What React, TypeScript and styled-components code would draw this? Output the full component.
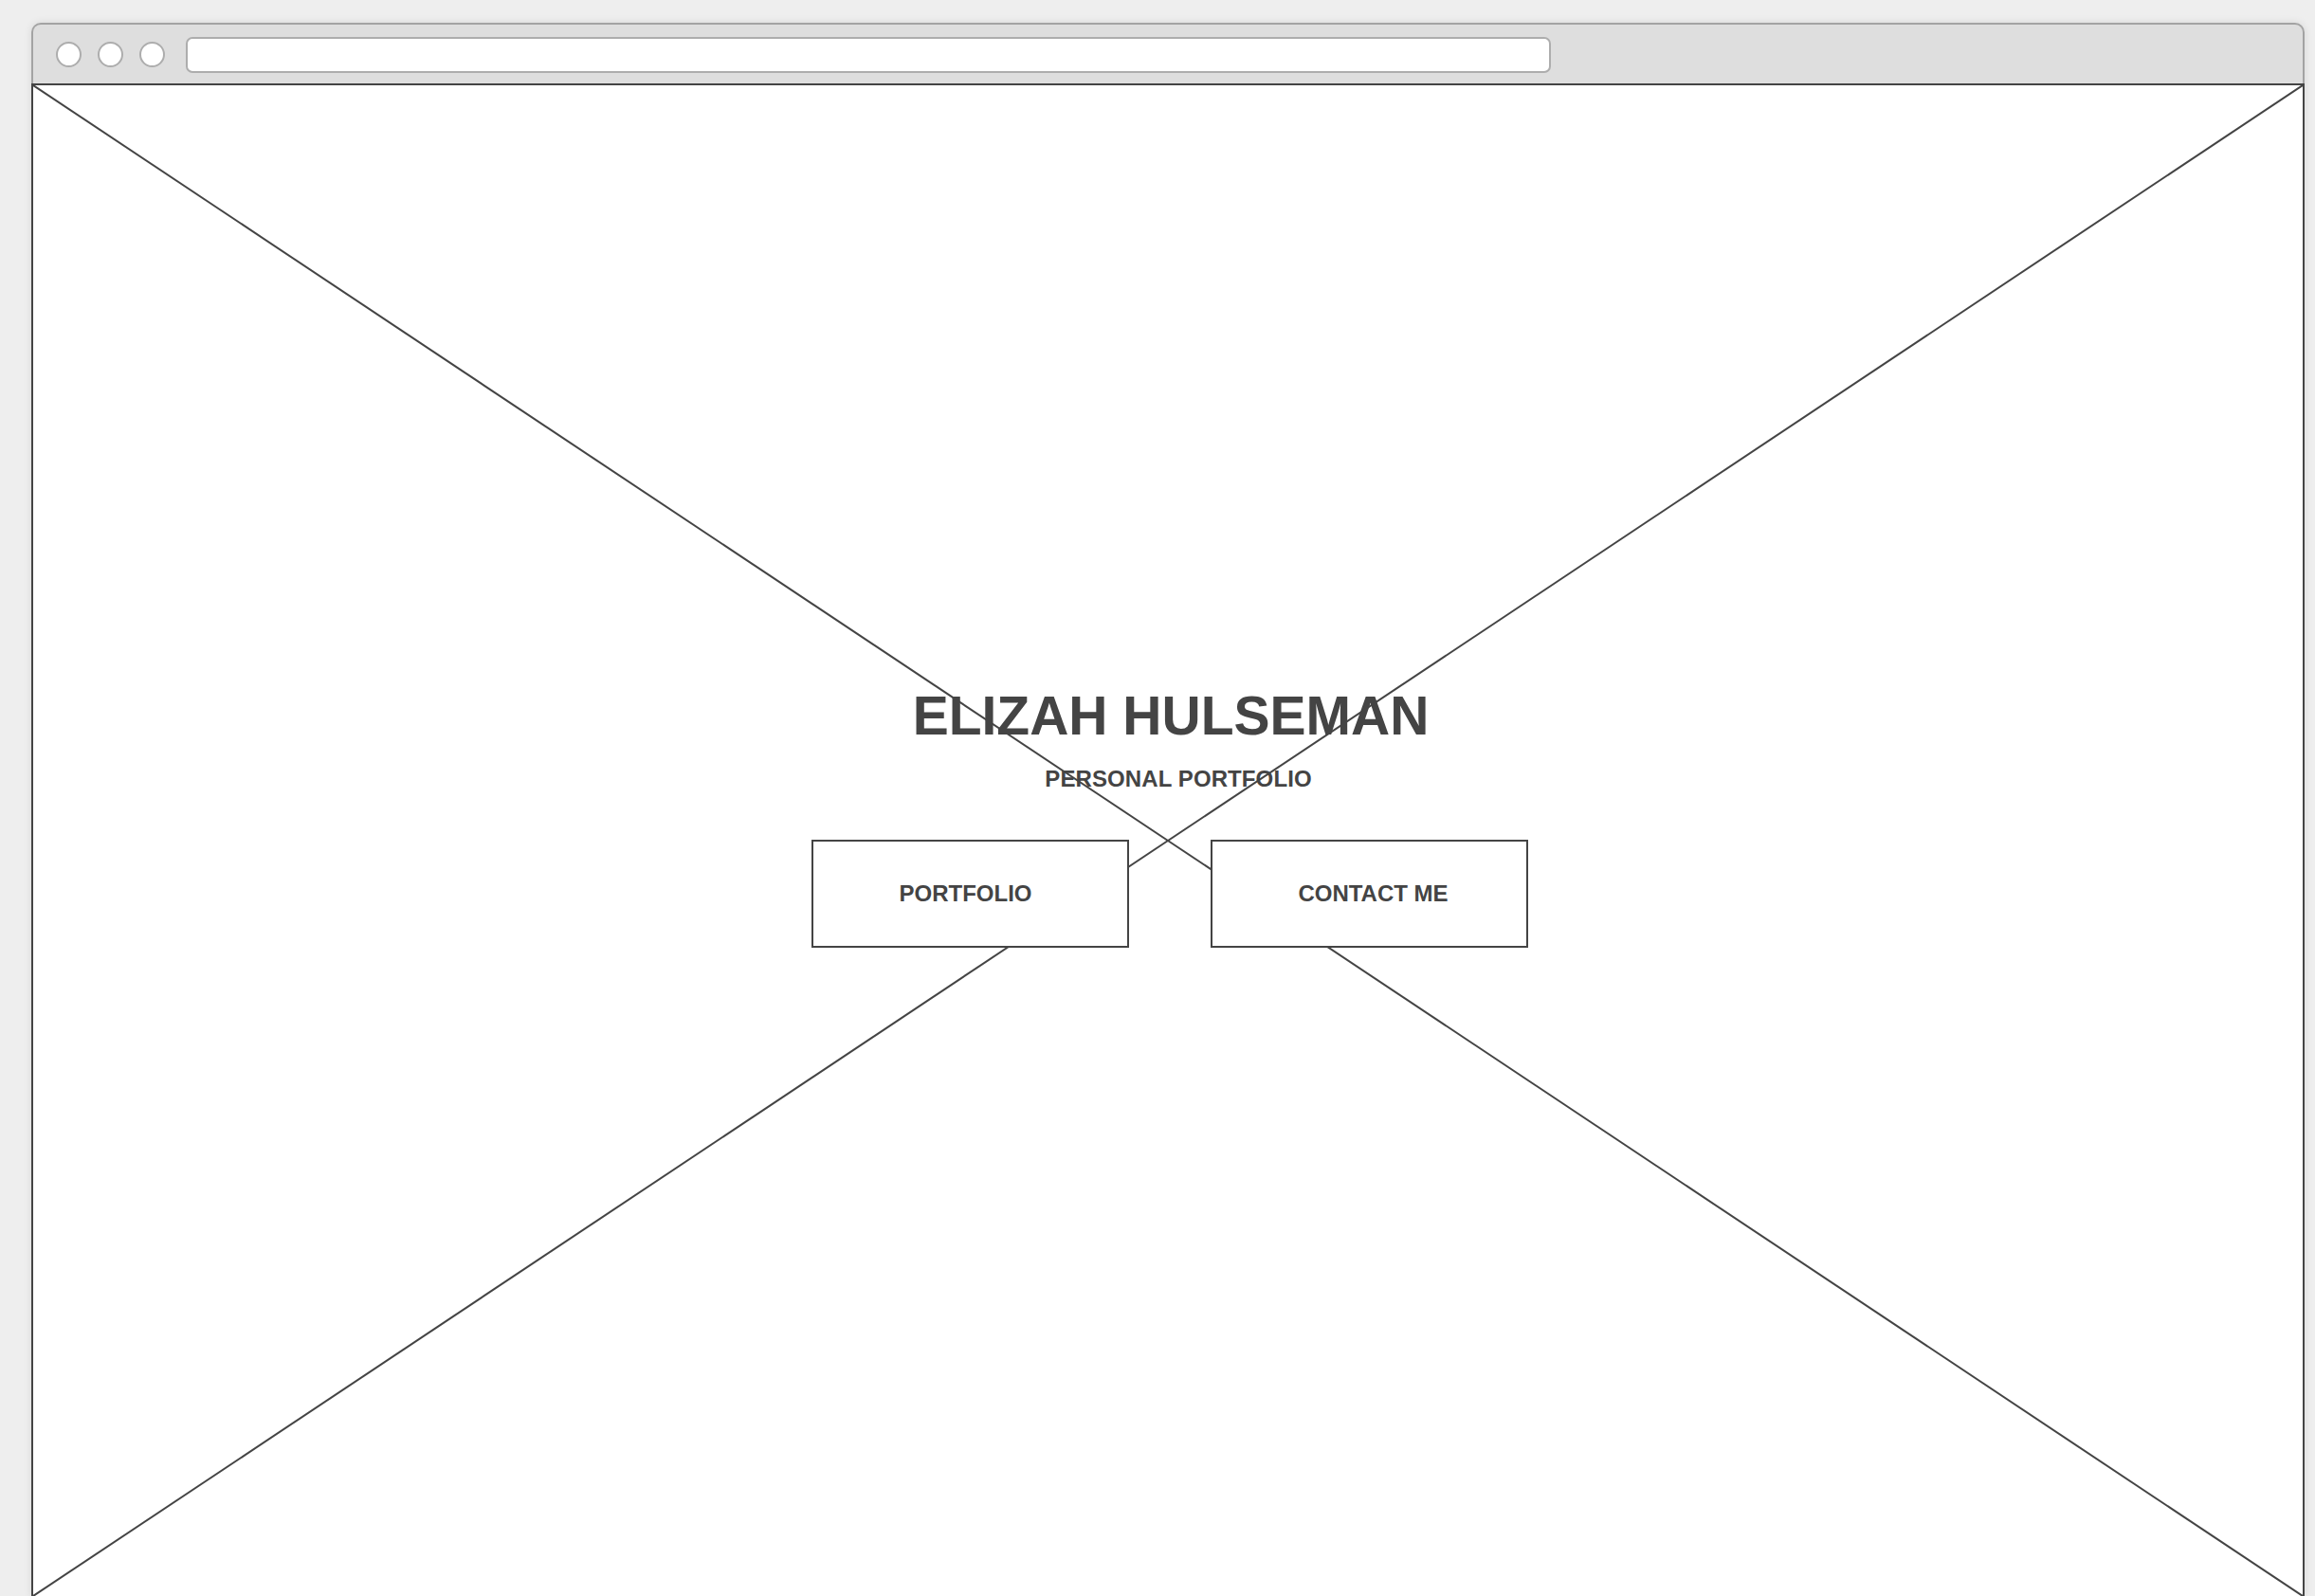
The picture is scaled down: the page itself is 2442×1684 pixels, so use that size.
import React from "react";
import styled, { createGlobalStyle } from "styled-components";

const GlobalStyle = createGlobalStyle`
  html, body {
    margin: 0;
    padding: 0;
    background: #eeeeee;
    overflow: hidden;
    font-family: "Liberation Sans", Arial, Helvetica, sans-serif;
  }
  * { box-sizing: border-box; }
`;

const Page = styled.div`
  height: 100vh;
  padding: 24px 0 0 33px;
`;

const Window = styled.div`
  width: 2398px;
  height: 1662px;
  display: flex;
  flex-direction: column;
  box-shadow: 0 0 8px rgba(0, 0, 0, 0.1);
  border-radius: 10px 10px 0 0;
`;

const TitleBar = styled.div`
  height: 64px;
  flex: none;
  display: flex;
  align-items: center;
  gap: 22px;
  padding-left: 24px;
  background: #dedede;
  border: 2px solid #a3a3a3;
  border-bottom: none;
  border-radius: 10px 10px 0 0;
`;

const Dots = styled.div`
  display: flex;
  gap: 17px;
`;

const Dot = styled.span`
  width: 27px;
  height: 27px;
  border-radius: 50%;
  border: 2px solid #adadad;
  background: #ffffff;
`;

const AddressBar = styled.div`
  width: 1440px;
  height: 38px;
  margin-top: 1px;
  border: 2px solid #adadad;
  border-radius: 7px;
  background: #ffffff;
`;

const Canvas = styled.div`
  position: relative;
  flex: 1;
  background: #ffffff;
  border: 2px solid #444444;
`;

const Cross = styled.svg`
  position: absolute;
  inset: 0;
  width: 100%;
  height: 100%;
`;

const Hero = styled.div`
  position: relative;
  display: flex;
  flex-direction: column;
  align-items: center;
  padding-top: 637px;
  color: #444444;
`;

const Title = styled.h1`
  margin: 0;
  padding-left: 6px;
  font-size: 57px;
  line-height: 1;
  font-weight: 700;
`;

const Subtitle = styled.h2`
  margin: 26px 0 0;
  padding-left: 22px;
  font-size: 24px;
  letter-spacing: 0.1px;
  line-height: 1;
  font-weight: 700;
`;

const ButtonRow = styled.div`
  display: flex;
  gap: 86px;
  margin-top: 52px;
  padding-left: 4px;
`;

const Button = styled.button<{ $nudge: number }>`
  width: 335px;
  height: 114px;
  display: flex;
  align-items: center;
  justify-content: center;
  padding: 0 ${(p) => (p.$nudge < 0 ? -2 * p.$nudge : 0)}px 0
    ${(p) => (p.$nudge > 0 ? 2 * p.$nudge : 0)}px;
  background: #ffffff;
  border: 2px solid #444444;
  border-radius: 0;
  color: #444444;
  font-family: "Liberation Sans", Arial, Helvetica, sans-serif;
  font-size: 24px;
  line-height: 1;
  font-weight: 700;
  cursor: pointer;
`;

export default function App() {
  return (
    <>
      <GlobalStyle />
      <Page>
        <Window>
          <TitleBar>
            <Dots>
              <Dot />
              <Dot />
              <Dot />
            </Dots>
            <AddressBar />
          </TitleBar>
          <Canvas>
            <Cross viewBox="0 0 100 100" preserveAspectRatio="none">
              <line x1="0" y1="0" x2="100" y2="100" stroke="#444" strokeWidth="2" vectorEffect="non-scaling-stroke" />
              <line x1="100" y1="0" x2="0" y2="100" stroke="#444" strokeWidth="2" vectorEffect="non-scaling-stroke" />
            </Cross>
            <Hero>
              <Title>ELIZAH HULSEMAN</Title>
              <Subtitle>PERSONAL PORTFOLIO</Subtitle>
              <ButtonRow>
                <Button $nudge={-5}>PORTFOLIO</Button>
                <Button $nudge={4}>CONTACT ME</Button>
              </ButtonRow>
            </Hero>
          </Canvas>
        </Window>
      </Page>
    </>
  );
}
